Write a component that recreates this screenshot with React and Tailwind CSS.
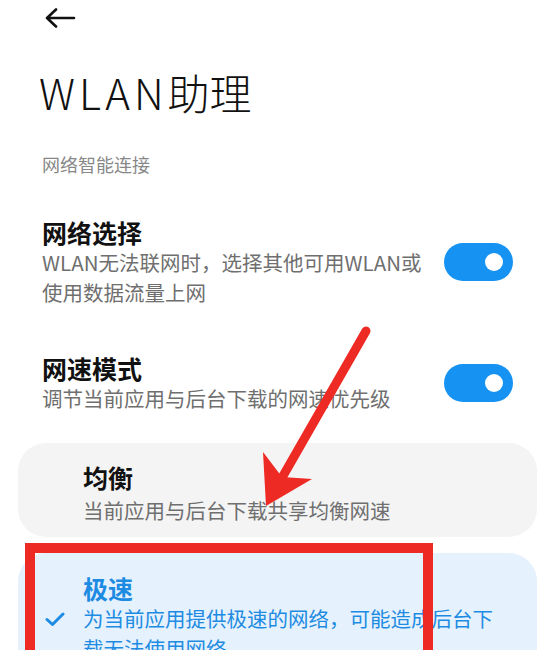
import React from 'react';

const FONT = { fontFamily: '"Noto Sans CJK SC", "Noto Sans", sans-serif' };

// ─── Toggle (always on) ───────────────────────────────────
const Toggle = () => (
  <div className="w-[69px] h-[38px] shrink-0 rounded-full bg-[#1592f2] flex items-center justify-end pr-[10px]">
    <div className="w-[18px] h-[18px] rounded-full bg-white" />
  </div>
);

// ─── Setting row with title, description and switch ───────
const SettingRow = ({ title, desc, className = '' }) => (
  <div className={`flex items-center pl-[42px] pr-[41px] gap-[14px] ${className}`}>
    <div className="flex-1 min-w-0">
      <div className="text-[25px] leading-[30px] font-semibold text-[#111]">{title}</div>
      <div className="text-[20.5px] leading-[30px] text-[#6f6f6f]">{desc}</div>
    </div>
    <Toggle />
  </div>
);

const Check = () => (
  <svg width="20" height="14" viewBox="0 0 20 14" className="shrink-0 mt-[9px]">
    <path d="M2 7.5 L7.5 12.5 L18 2" fill="none" stroke="#1e8be3" strokeWidth="3" strokeLinecap="round" strokeLinejoin="round" />
  </svg>
);

export default function App() {
  return (
    <div className="relative w-full h-[650px] overflow-hidden bg-white" style={FONT}>
      {/* Back */}
      <div className="pt-[8px] pl-[44px]">
        <svg width="32" height="20" viewBox="0 0 32 20">
          <path d="M3 10 H30 M12 1.5 L3 10 L12 18.5" fill="none" stroke="#111" strokeWidth="2.6" strokeLinecap="round" strokeLinejoin="round" />
        </svg>
      </div>

      <h1 className="mt-[43px] pl-[39px] text-[42px] leading-[42px] font-light text-[#111]">
        <span className="tracking-[4px]">WLAN</span>助理
      </h1>

      <div className="mt-[42px] pl-[42px] text-[18px] leading-[18px] text-[#888]">网络智能连接</div>

      <SettingRow
        className="mt-[44px]"
        title="网络选择"
        desc="WLAN无法联网时，选择其他可用WLAN或使用数据流量上网"
      />
      <SettingRow
        className="mt-[46px]"
        title="网速模式"
        desc="调节当前应用与后台下载的网速优先级"
      />

      {/* Mode cards */}
      <div className="mt-[30px] ml-[18px] mr-[17px] flex flex-col gap-[16px]">
        <div className="rounded-[28px] bg-[#f4f4f4] pl-[65px] pr-[40px] pt-[19px] pb-[12px]">
          <div className="text-[25px] leading-[30px] font-semibold text-[#111]">均衡</div>
          <div className="mt-[3px] text-[20.5px] leading-[30px] text-[#6f6f6f]">当前应用与后台下载共享均衡网速</div>
        </div>
        <div className="rounded-[28px] bg-[#e5f2fd] pl-[65px] pr-[40px] pt-[20px] pb-[20px]">
          <div className="text-[25px] leading-[30px] font-semibold text-[#1e8be3]">极速</div>
          <div className="flex items-start gap-[18px] -ml-[38px]">
            <Check />
            <div className="text-[20.5px] leading-[30px] text-[#1e8be3]">为当前应用提供极速的网络，可能造成后台下载无法使用网络</div>
          </div>
        </div>
      </div>

      {/* Red annotation: box */}
      <div className="absolute left-[25px] top-[543px] w-[408px] h-[130px] border-[10px] border-[#ee2a24]" />

      {/* Red annotation: arrow */}
      <svg className="absolute left-0 top-0 pointer-events-none" width="554" height="650" viewBox="0 0 554 650">
        <line x1="366" y1="331" x2="283" y2="476" stroke="#ee2a24" strokeWidth="9" strokeLinecap="round" />
        <polygon points="266,506 263,452 282,477 312,479" fill="#ee2a24" />
      </svg>
    </div>
  );
}
